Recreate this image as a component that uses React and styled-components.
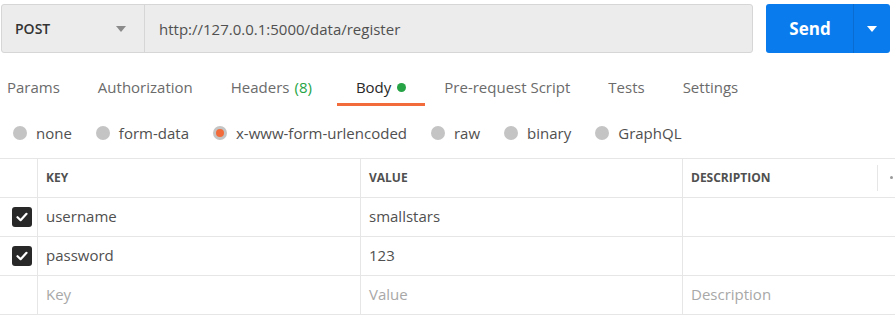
import React from 'react'
import styled, { createGlobalStyle } from 'styled-components'

const GlobalStyle = createGlobalStyle`
  html, body { margin: 0; padding: 0; background: #fff; }
  body { font-family: "Open Sans", "Liberation Sans", sans-serif; color: #505050; }
`

const tabs = [
  { label: 'Params' },
  { label: 'Authorization' },
  { label: 'Headers', count: '(8)' },
  { label: 'Body', active: true, dot: true },
  { label: 'Pre-request Script' },
  { label: 'Tests' },
  { label: 'Settings' },
]

const bodyTypes = ['none', 'form-data', 'x-www-form-urlencoded', 'raw', 'binary', 'GraphQL']

const rows = [
  { key: 'username', value: 'smallstars', checked: true },
  { key: 'password', value: '123', checked: true },
  { key: 'Key', value: 'Value', desc: 'Description', placeholder: true },
]

export default function App() {
  return (
    <Page>
      <GlobalStyle />

      <UrlBar>
        <UrlGroup>
          <Method>
            <span>POST</span>
            <Caret $color="#8a8a8a" />
          </Method>
          <UrlInput>http://127.0.0.1:5000/data/register</UrlInput>
        </UrlGroup>
        <SendButton>
          <SendLabel>Send</SendLabel>
          <SendArrow>
            <Caret $color="#fff" />
          </SendArrow>
        </SendButton>
      </UrlBar>

      <Tabs>
        {tabs.map(t => (
          <Tab key={t.label} $active={t.active}>
            {t.label}
            {t.count && <Count>{t.count}</Count>}
            {t.dot && <Dot />}
          </Tab>
        ))}
      </Tabs>

      <Radios>
        {bodyTypes.map(b => (
          <RadioItem key={b}>
            <Radio $on={b === 'x-www-form-urlencoded'} />
            {b}
          </RadioItem>
        ))}
      </Radios>

      <Table>
        <HeadRow>
          <CheckCell />
          <HeadCell>KEY</HeadCell>
          <HeadCell>VALUE</HeadCell>
          <HeadCell $last>
            DESCRIPTION
            <HeadTools>
              <Sep />
              <SmallDot />
            </HeadTools>
          </HeadCell>
        </HeadRow>
        {rows.map((r, i) => (
          <BodyRow key={i}>
            <CheckCell>
              {r.checked && (
                <Check>
                  <svg width="12" height="10" viewBox="0 0 12 10">
                    <path d="M1.5 5.2 L4.6 8.2 L10.5 1.8" fill="none" stroke="#fff" strokeWidth="2.2" strokeLinecap="round" strokeLinejoin="round" />
                  </svg>
                </Check>
              )}
            </CheckCell>
            <Cell $ph={r.placeholder}>{r.key}</Cell>
            <Cell $ph={r.placeholder}>{r.value}</Cell>
            <Cell $ph={r.placeholder} $last>{r.desc || ''}</Cell>
          </BodyRow>
        ))}
      </Table>
    </Page>
  )
}

////////////////////////////////////////////////////
// Styles
////////////////////////////////////////////////////

const Page = styled.div`
  width: 895px;
  height: 315px;
  overflow: hidden;
  position: relative;
`

const UrlBar = styled.div`
  display: flex;
  align-items: stretch;
  padding: 4px 5px 0 1px;
  height: 49px;
  gap: 13px;
`

const UrlGroup = styled.div`
  display: flex;
  width: 752px;
  background: #ececec;
  border: 1px solid #d6d6d6;
  border-radius: 3px;
  box-sizing: border-box;
`

const Method = styled.div`
  width: 143px;
  box-sizing: border-box;
  border-right: 1px solid #d6d6d6;
  display: flex;
  align-items: center;
  justify-content: space-between;
  padding: 0 18px 0 13px;
  font-size: 14px;
  font-weight: 600;
  color: #333;
`

const Caret = styled.span`
  width: 0;
  height: 0;
  border-left: 5px solid transparent;
  border-right: 5px solid transparent;
  border-top: 6px solid ${p => p.$color};
`

const UrlInput = styled.div`
  display: flex;
  align-items: center;
  padding-left: 14px;
  font-size: 15px;
  color: #505050;
`

const SendButton = styled.div`
  display: flex;
  width: 124px;
  background: #097bed;
  border-radius: 3px;
  color: #fff;
`

const SendLabel = styled.div`
  width: 86px;
  display: flex;
  align-items: center;
  justify-content: center;
  font-size: 17px;
  font-weight: 700;
  border-right: 1px solid #0a6bd0;
  padding-left: 1px;
`

const SendArrow = styled.div`
  flex: 1;
  display: flex;
  align-items: center;
  justify-content: center;
`

const Tabs = styled.div`
  display: flex;
  padding-left: 7px;
  margin-top: 24px;
  height: 29px;
`

const Tab = styled.div`
  display: flex;
  align-items: flex-start;
  font-size: 15px;
  line-height: 20px;
  color: ${p => (p.$active ? '#282828' : '#6b6b6b')};
  padding: 0 19px;
  position: relative;
  height: 29px;
  &:first-child { padding-left: 0; }
  ${p => p.$active && `
    &::after {
      content: '';
      position: absolute;
      left: 0;
      right: 0;
      bottom: 0;
      height: 3px;
      background: #f26b3a;
    }
  `}
`

const Count = styled.span`
  color: #26a445;
  margin: 0 6px 0 5px;
`

const Dot = styled.span`
  width: 9px;
  height: 9px;
  border-radius: 50%;
  background: #26a445;
  margin: 6px 0 0 6px;
`

const Radios = styled.div`
  display: flex;
  padding-left: 13px;
  height: 35px;
  margin-top: 17px;
  align-items: flex-start;
`

const RadioItem = styled.div`
  display: flex;
  align-items: center;
  gap: 9px;
  font-size: 15px;
  line-height: 20px;
  color: #505050;
  margin-right: 24px;
`

const Radio = styled.span`
  width: 14px;
  height: 14px;
  border-radius: 50%;
  background: ${p => (p.$on ? '#f26b3a' : '#c4c4c4')};
  box-sizing: border-box;
  ${p => p.$on && 'border: 3px solid #c4c4c4;'}
`

const Table = styled.div`
  border-top: 1px solid #e6e6e6;
`

const gridCols = `38px 323px 322px 1fr`

const HeadRow = styled.div`
  display: grid;
  grid-template-columns: ${gridCols};
  height: 38px;
  border-bottom: 1px solid #e6e6e6;
`

const BodyRow = styled(HeadRow)``

const CheckCell = styled.div`
  border-right: 1px solid #e6e6e6;
  display: flex;
  align-items: center;
  padding-left: 12px;
`

const HeadCell = styled.div`
  display: flex;
  align-items: center;
  padding: 0 0 1px 8px;
  font-size: 12px;
  font-weight: 700;
  color: #505050;
  border-right: ${p => (p.$last ? 'none' : '1px solid #e6e6e6')};
`

const HeadTools = styled.div`
  margin-left: auto;
  display: flex;
  align-items: center;
  height: 100%;
`

const Sep = styled.span`
  width: 1px;
  height: 26px;
  background: #e6e6e6;
  margin-right: 12px;
`

const SmallDot = styled.span`
  width: 3px;
  height: 3px;
  border-radius: 50%;
  background: #9a9a9a;
  margin-right: 2px;
`

const Cell = styled.div`
  display: flex;
  align-items: center;
  padding: 0 0 2px 8px;
  font-size: 15px;
  color: ${p => (p.$ph ? '#a8a8a8' : '#505050')};
  border-right: ${p => (p.$last ? 'none' : '1px solid #e6e6e6')};
`

const Check = styled.span`
  width: 20px;
  height: 20px;
  border-radius: 3px;
  background: #282828;
  display: flex;
  align-items: center;
  justify-content: center;
`
